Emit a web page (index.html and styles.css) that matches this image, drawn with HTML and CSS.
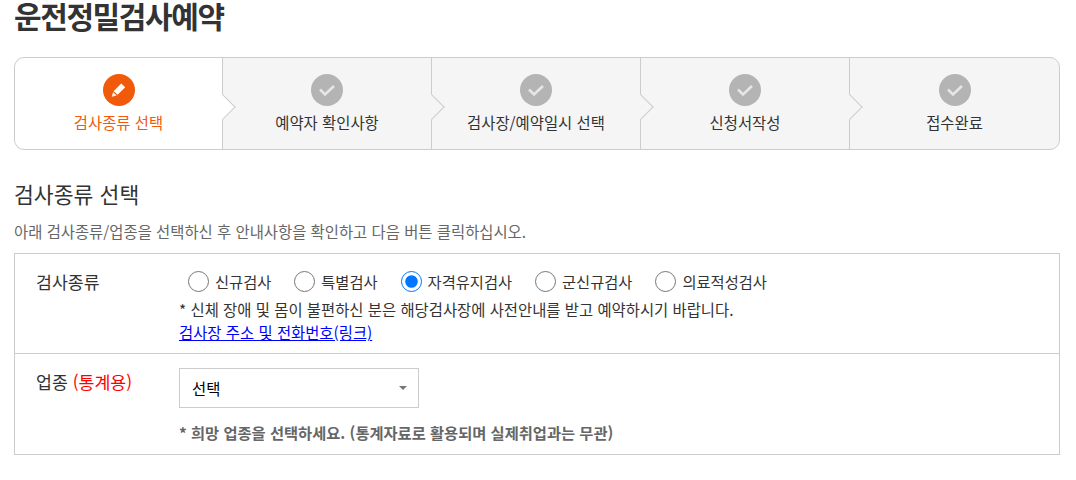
FILE: index.html
```html
<!DOCTYPE html>
<html lang="ko">
<head>
    <meta charset="UTF-8">
    <title>운전정밀검사예약</title>
    <link rel="stylesheet" href="styles.css">
</head>
<body>
    <div class="container">
        <h1 class="page-title">운전정밀검사예약</h1>

        <ul class="steps">
            <li class="step active">
                <span class="step-icon">
                    <svg width="18" height="18" viewBox="0 0 18 18"><path d="M11.2 2.6l4 3.6-7.6 7.6-4-3.6z" fill="#fff"/><path d="M3 11.2l3.6 3.4-4.8 1.2z" fill="#fff"/></svg>
                </span>
                <span class="step-label">검사종류 선택</span>
            </li>
            <li class="step">
                <span class="step-icon">
                    <svg width="18" height="18" viewBox="0 0 18 18"><path d="M2 8.5l5 5 9-8.5" fill="none" stroke="#e6e6e6" stroke-width="2.6"/></svg>
                </span>
                <span class="step-label">예약자 확인사항</span>
            </li>
            <li class="step">
                <span class="step-icon">
                    <svg width="18" height="18" viewBox="0 0 18 18"><path d="M2 8.5l5 5 9-8.5" fill="none" stroke="#e6e6e6" stroke-width="2.6"/></svg>
                </span>
                <span class="step-label">검사장/예약일시 선택</span>
            </li>
            <li class="step">
                <span class="step-icon">
                    <svg width="18" height="18" viewBox="0 0 18 18"><path d="M2 8.5l5 5 9-8.5" fill="none" stroke="#e6e6e6" stroke-width="2.6"/></svg>
                </span>
                <span class="step-label">신청서작성</span>
            </li>
            <li class="step">
                <span class="step-icon">
                    <svg width="18" height="18" viewBox="0 0 18 18"><path d="M2 8.5l5 5 9-8.5" fill="none" stroke="#e6e6e6" stroke-width="2.6"/></svg>
                </span>
                <span class="step-label">접수완료</span>
            </li>
        </ul>

        <h2 class="section-title">검사종류 선택</h2>
        <p class="section-desc">아래 검사종류/업종을 선택하신 후 안내사항을 확인하고 다음 버튼 클릭하십시오.</p>

        <div class="form-box">
            <div class="form-row row-type">
                <div class="form-label">검사종류</div>
                <div class="form-field">
                    <div class="radio-group">
                        <label class="radio"><input type="radio" name="kind">신규검사</label>
                        <label class="radio"><input type="radio" name="kind">특별검사</label>
                        <label class="radio"><input type="radio" name="kind" checked>자격유지검사</label>
                        <label class="radio"><input type="radio" name="kind">군신규검사</label>
                        <label class="radio"><input type="radio" name="kind">의료적성검사</label>
                    </div>
                    <p class="note">* 신체 장애 및 몸이 불편하신 분은 해당검사장에 사전안내를 받고 예약하시기 바랍니다.</p>
                    <a class="link" href="#">검사장 주소 및 전화번호(링크)</a>
                </div>
            </div>
            <div class="form-row row-job">
                <div class="form-label">업종 <span class="red">(통계용)</span></div>
                <div class="form-field">
                    <div class="select-box">선택<span class="caret"></span></div>
                    <p class="note-bold">* 희망 업종을 선택하세요. (통계자료로 활용되며 실제취업과는 무관)</p>
                </div>
            </div>
        </div>
    </div>
</body>
</html>
```

FILE: styles.css
```css
* {
    box-sizing: border-box;
}
body {
    margin: 0;
    background: #fff;
    color: #333;
    font-family: "Noto Sans CJK KR", "Noto Sans", sans-serif;
    font-size: 15.4px;
    overflow: hidden;
}
.container {
    width: 1046px;
    margin-left: 14px;
}
.page-title {
    margin: 0;
    height: 57px;
    font-size: 30px;
    line-height: 30px;
    font-weight: 700;
    letter-spacing: -1.4px;
}
.steps {
    display: flex;
    height: 93px;
    margin: 0;
    padding: 0;
    list-style: none;
    border: 1px solid #ccc;
    border-radius: 10px;
    background: #f5f5f5;
}
.step {
    position: relative;
    width: 209px;
    display: flex;
    flex-direction: column;
    align-items: center;
    padding-top: 16px;
    border-left: 1px solid #ccc;
}
.step:first-child {
    width: 207px;
    border-left: none;
    background: #fff;
    border-radius: 10px 0 0 10px;
}
.step:last-child {
    flex: 1;
}
/* arrow on the divider */
.step:not(:first-child)::before {
    content: "";
    position: absolute;
    left: -9px;
    top: 40px;
    width: 17px;
    height: 17px;
    background: #fff;
    border-top: 1px solid #ccc;
    border-right: 1px solid #ccc;
    transform: rotate(45deg);
}
.step:nth-child(n+3)::before {
    background: #f5f5f5;
}
.step-icon {
    width: 32px;
    height: 32px;
    border-radius: 50%;
    background: #b4b4b4;
    display: flex;
    align-items: center;
    justify-content: center;
}
.active .step-icon {
    background: #f15a0a;
}
.step-label {
    margin-top: 5px;
    line-height: 22px;
}
.active .step-label {
    color: #f15a0a;
}
.section-title {
    margin: 30px 0 0;
    font-size: 21.6px;
    line-height: 28px;
    font-weight: 400;
}
.section-desc {
    margin: 12px 0 0;
    line-height: 22px;
    color: #666;
}
.form-box {
    margin-top: 11px;
    border: 1px solid #ccc;
}
.form-row {
    display: flex;
}
.row-type {
    height: 100px;
    border-bottom: 1px solid #ccc;
}
.row-job {
    height: 100px;
}
.form-label {
    width: 164px;
    padding: 16px 0 0 21px;
    font-size: 17.3px;
    line-height: 24px;
}
.red {
    color: #f00;
}
.form-field {
    flex: 1;
}
.radio-group {
    display: flex;
    gap: 23px;
    margin: 15px 0 0 9px;
    height: 24px;
    font-size: 15.3px;
}
.radio {
    display: flex;
    align-items: center;
}
.radio input {
    width: 21px;
    height: 21px;
    margin: 0 6px 0 0;
}
.note {
    margin: 5px 0 0;
    line-height: 22px;
}
.link {
    display: block;
    line-height: 24px;
    color: #00f;
    text-decoration: underline;
}
.select-box {
    position: relative;
    width: 240px;
    height: 40px;
    margin-top: 14px;
    padding-left: 12px;
    border: 1px solid #ccc;
    background: #fff;
    color: #000;
    line-height: 38px;
}
.caret {
    position: absolute;
    right: 11px;
    top: 17px;
    border-left: 4px solid transparent;
    border-right: 4px solid transparent;
    border-top: 4px solid #777;
}
.note-bold {
    margin: 13px 0 0;
    font-size: 15.3px;
    line-height: 22px;
    font-weight: 700;
    color: #666;
}
```
